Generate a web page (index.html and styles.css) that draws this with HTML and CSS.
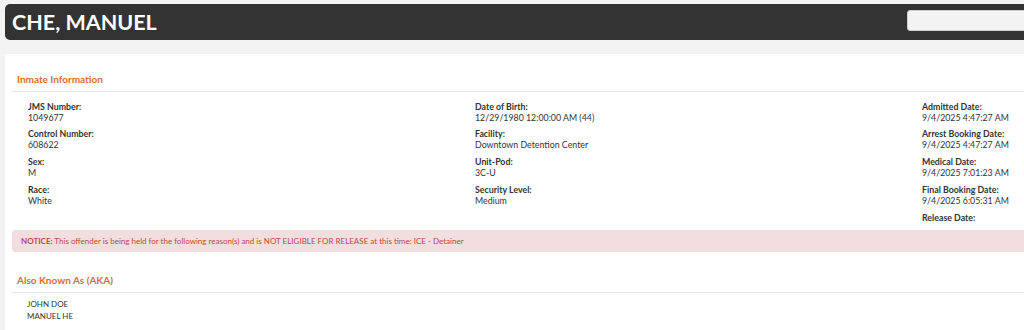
FILE: index.html
```html
<!DOCTYPE html>
<html lang="en">
<head>
    <meta charset="UTF-8">
    <title>Inmate Details</title>
    <link rel="stylesheet" href="styles.css">
</head>
<body>
    <div class="header">
        <h1>CHE, MANUEL</h1>
        <input type="text" class="search">
    </div>
    <div class="panel">
        <h2>Inmate Information</h2>
        <div class="info-grid">
            <div class="col">
                <div class="field"><div class="label">JMS Number:</div><div class="value">1049677</div></div>
                <div class="field"><div class="label">Control Number:</div><div class="value">608622</div></div>
                <div class="field"><div class="label">Sex:</div><div class="value">M</div></div>
                <div class="field"><div class="label">Race:</div><div class="value">White</div></div>
            </div>
            <div class="col">
                <div class="field"><div class="label">Date of Birth:</div><div class="value">12/29/1980 12:00:00 AM (44)</div></div>
                <div class="field"><div class="label">Facility:</div><div class="value">Downtown Detention Center</div></div>
                <div class="field"><div class="label">Unit-Pod:</div><div class="value">3C-U</div></div>
                <div class="field"><div class="label">Security Level:</div><div class="value">Medium</div></div>
            </div>
            <div class="col">
                <div class="field"><div class="label">Admitted Date:</div><div class="value">9/4/2025 4:47:27 AM</div></div>
                <div class="field"><div class="label">Arrest Booking Date:</div><div class="value">9/4/2025 4:47:27 AM</div></div>
                <div class="field"><div class="label">Medical Date:</div><div class="value">9/4/2025 7:01:23 AM</div></div>
                <div class="field"><div class="label">Final Booking Date:</div><div class="value">9/4/2025 6:05:31 AM</div></div>
                <div class="field"><div class="label">Release Date:</div><div class="value"></div></div>
            </div>
        </div>
        <div class="notice"><b>NOTICE:</b> This offender is being held for the following reason(s) and is NOT ELIGIBLE FOR RELEASE at this time: ICE - Detainer</div>
        <h2 class="aka-title">Also Known As (AKA)</h2>
        <div class="aka-list">
            <div>JOHN DOE</div>
            <div>MANUEL HE</div>
        </div>
    </div>
</body>
</html>
```

FILE: styles.css
```css
body {
    margin: 0;
    font-family: Lato, 'Open Sans', sans-serif;
    background-color: #f3f3f3;
    color: #333;
    overflow: hidden;
}

.header {
    display: flex;
    align-items: center;
    width: 1100px;
    height: 36px;
    margin: 4px 0 0 5px;
    background-color: #333;
    border-radius: 5px;
}

.header h1 {
    margin: 0 0 0 7px;
    color: #fff;
    font-size: 21.5px;
    font-weight: 700;
}

.search {
    width: 198px;
    height: 21px;
    margin: -3px 0 0 auto;
    border: 1px solid #ccc;
    border-radius: 3px;
    background-color: #f3f3f3;
    box-sizing: border-box;
}

.panel {
    width: 1100px;
    height: 300px;
    margin: 14px 0 0 5px;
    padding: 19px 0 0 7px;
    background-color: #fff;
    box-sizing: border-box;
}

.panel h2 {
    margin: 0;
    padding: 0 0 6px 5px;
    color: #d2702f;
    font-size: 10px;
    line-height: 12px;
    font-weight: 700;
    border-bottom: 1px solid #e5e5e5;
}

.info-grid {
    display: grid;
    grid-template-columns: 447px 447px 447px;
    padding: 8.5px 0 0 16px;
}

.field {
    margin-bottom: 5.75px;
    font-size: 8.8px;
    line-height: 11px;
}

.label {
    font-weight: 700;
}

.value {
    min-height: 11px;
}

.notice {
    margin-top: -9.5px;
    padding: 6px 9px;
    background-color: #f2dede;
    color: #b94a48;
    font-size: 8px;
    line-height: 10px;
    border-radius: 3px;
}

.panel .aka-title {
    margin-top: 22px;
}

.aka-list {
    padding: 5px 0 0 15px;
    font-size: 8px;
    line-height: 12px;
    color: #333;
}
```
